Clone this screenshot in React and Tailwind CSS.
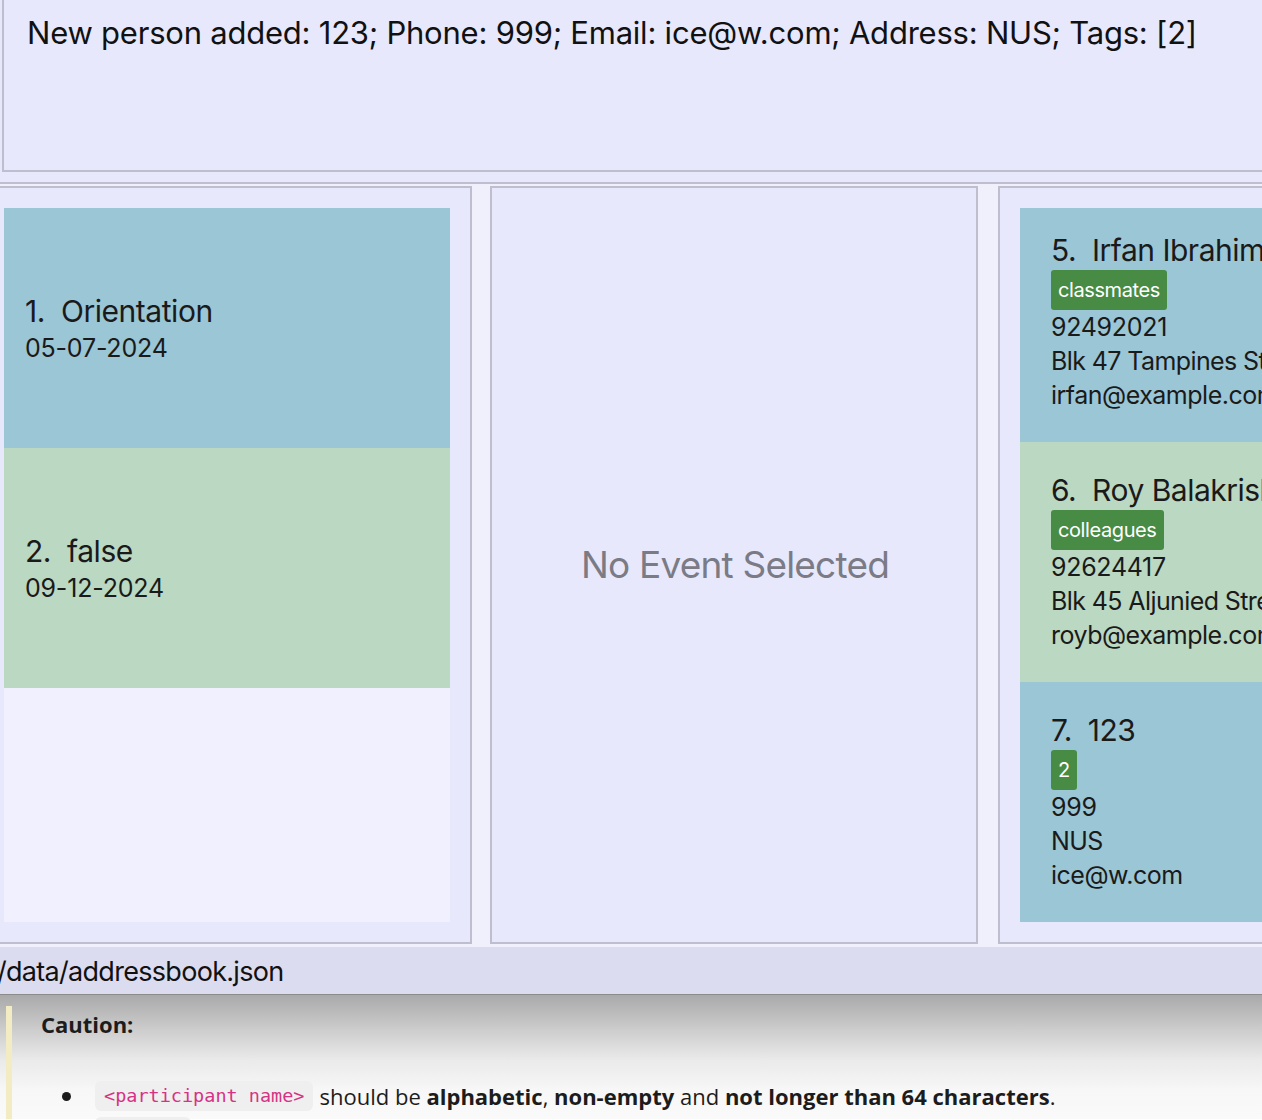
import React from "react";

function EventCard({ idx, name, date, color }) {
  return (
    <div className={`h-[240px] flex flex-col justify-center pl-[21px] ${color}`}>
      <div className="text-[30px] leading-[36px] tracking-[-0.45px] text-[#1a1a1a] whitespace-pre">{`${idx}.  ${name}`}</div>
      <div className="mt-[4px] text-[25px] leading-[30px] tracking-[-0.2px] text-[#1a1a1a]">{date}</div>
    </div>
  );
}

function PersonCard({ idx, name, tag, phone, address, email, color, extra = "" }) {
  return (
    <div className={`h-[240px] shrink-0 flex flex-col justify-center pl-[31px] whitespace-nowrap ${color} ${extra}`}>
      <div className="text-[30px] leading-[36px] tracking-[-0.5px] text-[#1a1a1a] whitespace-pre">{`${idx}.  ${name}`}</div>
      <div className="mt-[2px] flex">
        <span className="h-[40px] px-[7px] rounded-[3px] bg-[#478b45] text-white text-[20px] tracking-[-0.4px] leading-[40px]">{tag}</span>
      </div>
      <div className="text-[25px] leading-[34px] tracking-[-0.3px] text-[#1a1a1a]">{phone}</div>
      <div className="text-[25px] leading-[34px] tracking-[-0.6px] text-[#1a1a1a]">{address}</div>
      <div className="text-[25px] leading-[34px] tracking-[-0.5px] text-[#1a1a1a]">{email}</div>
    </div>
  );
}

function Code({ children }) {
  return (
    <code className="inline-block bg-[#efefef] rounded-[6px] px-[9px] h-[30px] leading-[30px] font-['DejaVu_Sans_Mono',monospace] text-[18.5px] text-[#d63384]">
      {children}
    </code>
  );
}

export default function App() {
  return (
    <div className="w-[1262px] h-[1120px] overflow-hidden bg-white">
      <div className="w-[1420px] -ml-[18px] font-['Inter',sans-serif] flex flex-col">
        {/* Result display */}
        <div className="bg-[#e8e8fc] pl-[20px] pb-[10px]">
          <div className="-mt-[2px] h-[174px] border-2 border-[#bebece] bg-[#e8e8fc] pl-[23px] pt-[13px]">
            <div className="text-[31px] leading-[40px] tracking-[-0.22px] text-[#111] whitespace-nowrap">
              New person added: 123; Phone: 999; Email: ice@w.com; Address: NUS; Tags: [2]
            </div>
          </div>
        </div>

        {/* Split pane */}
        <div className="border-t-2 border-[#bebece] bg-[#f0f0fc] pt-[2px] pb-[3px] flex gap-[18px]">
          <div className="w-[490px] h-[758px] border-2 border-[#bebece] bg-[#e8e8fc] p-[20px] shrink-0">
            <div className="h-full bg-[#f0f0fe] flex flex-col">
              <EventCard idx={1} name="Orientation" date="05-07-2024" color="bg-[#9ac6d6]" />
              <EventCard idx={2} name="false" date="09-12-2024" color="bg-[#bad8c2]" />
            </div>
          </div>

          <div className="w-[488px] h-[758px] border-2 border-[#bebece] bg-[#e8e8fc] shrink-0 flex items-center justify-center">
            <div className="text-[37px] leading-[46px] tracking-[-0.8px] text-[#7b7b86] ml-[2px]">No Event Selected</div>
          </div>

          <div className="ml-[2px] w-[500px] h-[758px] border-2 border-[#bebece] bg-[#e8e8fc] p-[20px] pr-0 shrink-0">
            <div className="h-full overflow-hidden flex flex-col bg-[#f0f0fe]">
              <PersonCard
                idx={5}
                name="Irfan Ibrahim"
                tag="classmates"
                phone="92492021"
                address="Blk 47 Tampines Street 20, #17-35"
                email="irfan@example.com"
                color="bg-[#9ac6d6]"
                extra="-mt-[6px]"
              />
              <PersonCard
                idx={6}
                name="Roy Balakrishnan"
                tag="colleagues"
                phone="92624417"
                address="Blk 45 Aljunied Street 85, #11-31"
                email="royb@example.com"
                color="bg-[#bad8c2]"
              />
              <PersonCard
                idx={7}
                name="123"
                tag="2"
                phone="999"
                address="NUS"
                email="ice@w.com"
                color="bg-[#9ac6d6]"
              />
            </div>
          </div>
        </div>

        {/* Status bar */}
        <div className="h-[48px] bg-[#dcdcf0] border-b border-[#8c8c8c] flex items-center pl-[15px]">
          <div className="text-[27px] leading-[36px] tracking-[-0.7px] text-[#111] whitespace-nowrap mt-[2px]">/data/addressbook.json</div>
        </div>
      </div>

      {/* Documentation page underneath */}
      <div className="h-[124px] bg-[linear-gradient(to_bottom,#a9a9a9_0px,#cdcdcd_35px,#eaeaea_65px,#f7f7f7_95px,#fafafa_124px)] flex font-['Open_Sans',sans-serif]">
        <div className="ml-[6px] mt-[11px] w-[6px] bg-[#f3ebc3] shrink-0" />
        <div className="pl-[29px] pt-[15px]">
          <div className="text-[22px] leading-[28px] font-bold text-[#1c1c1c]">Caution:</div>
          <ul className="mt-[43px] pl-[21px] text-[22px] leading-[30px] text-[#1c1c1c] flex flex-col gap-[6px]">
            <li className="whitespace-nowrap flex items-center">
              <span className="w-[9px] h-[9px] rounded-full bg-[#1c1c1c] mr-[24px] shrink-0" />
              <Code>{"<participant name>"}</Code>
              <span className="ml-[6px]">
                should be <b>alphabetic</b>, <b>non-empty</b> and <b>not longer than 64 characters</b>.
              </span>
            </li>
            <li className="whitespace-nowrap flex items-center">
              <span className="w-[9px] h-[9px] rounded-full bg-[#1c1c1c] mr-[24px] shrink-0" />
              <Code>{"<email>"}</Code>
            </li>
          </ul>
        </div>
      </div>
    </div>
  );
}
